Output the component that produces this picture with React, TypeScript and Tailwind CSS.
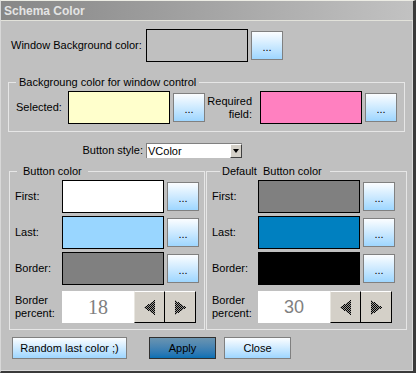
import React from 'react';

const Dots: React.FC = () => (
  <button className="w-[32px] h-[29px] shrink-0 border border-[#808080] bg-gradient-to-b from-[#fbfdff] to-[#9ed6ff] flex items-center justify-center pt-[3px] text-[11px] leading-none text-black">
    ...
  </button>
);

const Swatch: React.FC<{ color: string }> = ({ color }) => (
  <div className={`w-[102px] h-[33px] shrink-0 border border-black ${color}`} />
);

const Arrow: React.FC<{ dir: 'left' | 'right'; id: string }> = ({ dir, id }) => (
  <svg width="12" height="15" viewBox="0 0 12 15" shapeRendering="crispEdges">
    <defs>
      <pattern id={id} width="2" height="2" patternUnits="userSpaceOnUse">
        <rect width="2" height="2" fill="#9a9894" />
        <rect width="1" height="1" fill="#000" />
        <rect x="1" y="1" width="1" height="1" fill="#000" />
      </pattern>
    </defs>
    <polygon
      points={dir === 'left' ? '11,0 11,15 0,7.5' : '1,0 1,15 12,7.5'}
      fill={`url(#${id})`}
    />
  </svg>
);

const Spinner: React.FC<{ value: string; serif?: boolean; id: string }> = ({ value, serif, id }) => (
  <div className="flex h-[32px]">
    <div
      className={`w-[72px] bg-white flex items-center justify-center text-[#808080] ${
        serif ? "font-['Liberation_Serif',serif] text-[20px]" : 'text-[18px]'
      }`}
    >
      {value}
    </div>
    <button className="w-[31px] bg-[#d4d0c8] border-t border-l border-t-white border-l-[#e8e6e0] border-r border-b border-r-black border-b-black flex items-center justify-center">
      <Arrow dir="left" id={`${id}l`} />
    </button>
    <button className="w-[31px] bg-[#d4d0c8] border-t border-t-white border-r border-b border-r-black border-b-black flex items-center justify-center">
      <Arrow dir="right" id={`${id}r`} />
    </button>
  </div>
);

const Row: React.FC<{ label: string; color: string; w: string }> = ({ label, color, w }) => (
  <div className="flex items-center">
    <span className={w}>{label}</span>
    <Swatch color={color} />
    <div className="ml-[3px]">
      <Dots />
    </div>
  </div>
);

const App: React.FC = () => {
  return (
    <div className="w-[416px] h-[373px] bg-[#c0c0c0] border-t border-l border-t-[#ecece4] border-l-[#d8d8d8] border-r-[3px] border-b-2 border-r-[#3a3a3a] border-b-[#3a3a3a] flex flex-col font-['Liberation_Sans',Arial,sans-serif] text-[11px] leading-[13px] text-black overflow-hidden">
      <div className="h-[20px] shrink-0 bg-gradient-to-r from-[#878787] to-[#c2c2c2] border-b border-[#e2e2da] flex items-center pl-[3px] pt-[1px] text-[12px] font-bold text-[#e4e4e4]">
        Schema Color
      </div>

      <div className="flex-1 flex flex-col border-r border-b border-[#dadada]">
        {/* window background */}
        <div className="flex items-center mt-[8px] pl-[10px]">
          <span className="w-[135px]">Window Background color:</span>
          <Swatch color="bg-[#c0c0c0]" />
          <div className="ml-[3px]">
            <Dots />
          </div>
        </div>

        {/* window controls */}
        <fieldset className="ml-[7px] w-[395px] mt-[14px] border border-[#e6e6e6] px-[7px] pb-[7px]">
          <legend className="px-[3px]">Backgroung color for window control</legend>
          <div className="flex items-center pt-[2px]">
            <span className="w-[52px]">Selected:</span>
            <Swatch color="bg-[#ffffcc]" />
            <div className="ml-[3px]">
              <Dots />
            </div>
            <span className="w-[47px] text-right">
              Required
              <br />
              field:
            </span>
            <div className="ml-[8px]">
              <Swatch color="bg-[#ff80c0]" />
            </div>
            <div className="ml-[3px]">
              <Dots />
            </div>
          </div>
        </fieldset>

        {/* button style */}
        <div className="flex items-center mt-[11px]">
          <span className="w-[142px] text-right">Button style:</span>
          <div className="ml-[3px] w-[96px] h-[15px] bg-white border-t border-l border-[#808080] flex items-center justify-between pl-[1px]">
            <span>VColor</span>
            <div className="w-[12px] h-[14px] bg-[#d4d0c8] border-t border-l border-t-white border-l-white border-r border-b border-r-[#404040] border-b-[#404040] flex items-center justify-center">
              <div className="w-0 h-0 border-l-[3px] border-r-[3px] border-t-[4px] border-l-transparent border-r-transparent border-t-black" />
            </div>
          </div>
        </div>

        <div className="flex mt-[7px] ml-[8px]">
          <fieldset className="w-[196px] border border-[#e6e6e6] pl-[5px] pb-[6px]">
            <legend className="ml-[2px] px-[6px]">Button color</legend>
            <div className="flex flex-col gap-[3px] pt-[2px]">
              <Row label="First:" color="bg-white" w="w-[47px]" />
              <Row label="Last:" color="bg-[#99d6ff]" w="w-[47px]" />
              <Row label="Border:" color="bg-[#808080]" w="w-[47px]" />
              <div className="flex items-center mt-[3px]">
                <span className="w-[47px]">
                  Border
                  <br />
                  percent:
                </span>
                <Spinner value="18" serif id="a" />
              </div>
            </div>
          </fieldset>
          <fieldset className="ml-[1px] w-[201px] border border-[#e6e6e6] pl-[5px] pb-[6px]">
            <legend className="ml-[8px] px-[2px] pr-[8px] whitespace-pre">Default  Button color</legend>
            <div className="flex flex-col gap-[3px] pt-[2px]">
              <Row label="First:" color="bg-[#808080]" w="w-[46px]" />
              <Row label="Last:" color="bg-[#0080c0]" w="w-[46px]" />
              <Row label="Border:" color="bg-black" w="w-[46px]" />
              <div className="flex items-center mt-[3px]">
                <span className="w-[46px]">
                  Border
                  <br />
                  percent:
                </span>
                <Spinner value="30" id="b" />
              </div>
            </div>
          </fieldset>
        </div>

        {/* actions */}
        <div className="flex mt-[7px] ml-[11px]">
          <button className="w-[115px] h-[22px] border border-[#808080] bg-gradient-to-b from-[#fbfdff] to-[#9ed6ff] text-[11px]">
            Random last color ;)
          </button>
          <button className="ml-[22px] w-[67px] h-[22px] border border-[#303030] bg-gradient-to-b from-[#6a94b0] to-[#0670b4] text-[11px]">
            Apply
          </button>
          <button className="ml-[8px] w-[67px] h-[22px] border border-[#808080] bg-gradient-to-b from-[#fbfdff] to-[#9ed6ff] text-[11px]">
            Close
          </button>
        </div>
      </div>
    </div>
  );
};

export default App;
